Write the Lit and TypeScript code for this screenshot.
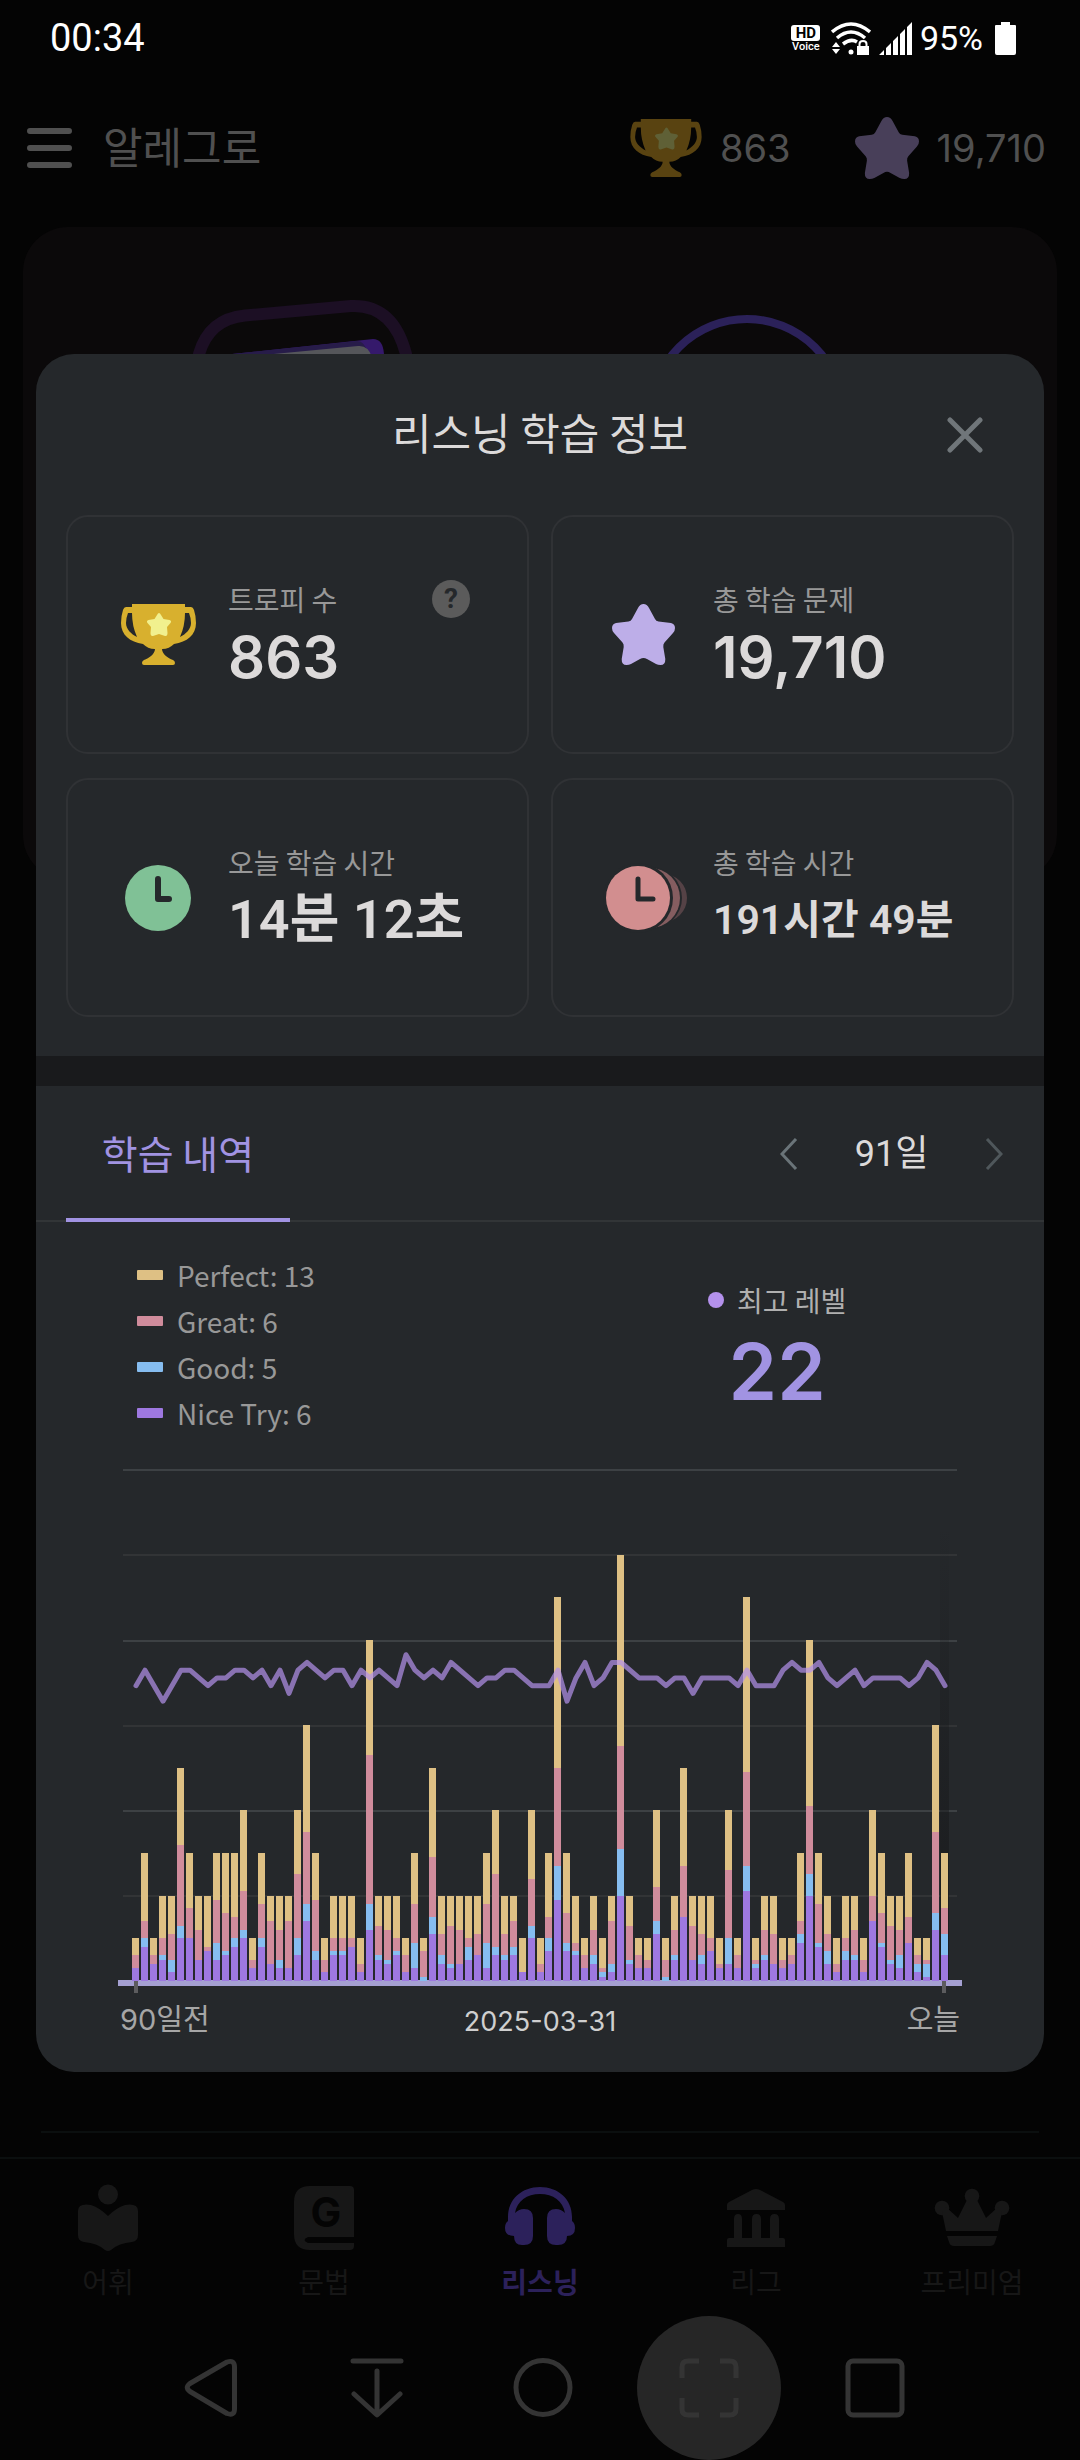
import { LitElement, html, svg, css, nothing } from "lit";
import { customElement } from "lit/decorators.js";

/* Cumulative answer counts per day: [nice try, good, great, perfect]. */
const DAYS: number[][] = [
  [3,3,6,10],[8,10,14,30],[4,4,6,10],[5,6,10,20],[2,5,11,20],[10,13,32,50],[10,10,17,30],[5,5,12,20],[7,7,8,20],[5,9,19,30],
  [6,7,16,30],[8,10,15,30],[10,12,21,40],[3,3,5,10],[8,10,18,30],[4,4,14,20],[3,5,12,20],[3,3,14,20],[6,10,25,40],[14,18,35,60],
  [5,7,19,30],[2,2,5,10],[6,7,10,20],[6,7,10,20],[8,8,10,20],[2,2,4,10],[12,18,53,80],[5,6,13,20],[4,5,12,20],[6,7,10,20],
  [2,2,6,10],[3,9,18,30],[0,1,7,10],[11,15,29,50],[4,6,11,20],[3,4,13,20],[4,4,12,20],[5,8,10,20],[6,6,11,20],[3,9,18,30],
  [6,8,25,40],[5,6,11,20],[6,8,14,20],[2,2,2,10],[10,13,24,40],[2,2,4,10],[7,10,15,30],[19,27,50,90],[7,9,16,30],[6,7,9,20],
  [3,3,6,10],[4,6,12,20],[1,2,3,10],[2,4,14,20],[20,31,55,100],[4,5,13,20],[3,3,6,10],[3,3,5,10],[11,14,22,40],[0,1,5,10],
  [5,6,12,20],[15,15,27,50],[5,5,13,20],[4,6,11,20],[7,7,10,20],[3,3,4,10],[4,10,26,40],[3,3,6,10],[21,27,49,90],[3,4,5,10],
  [5,6,12,20],[4,4,11,20],[3,3,5,10],[4,4,6,10],[9,11,14,30],[20,25,41,80],[8,9,18,30],[4,7,11,20],[2,2,4,10],[5,7,10,20],
  [5,6,12,20],[2,2,5,10],[14,14,20,40],[8,9,16,30],[4,5,13,20],[3,6,12,20],[9,9,15,30],[2,4,6,10],[1,4,5,10],[12,16,35,60],
  [6,11,17,30],
];

/* Level reached on each of the same days. */
const LEVELS: number[] = [
  22,24,22,20,22,24,24,23,22,23, 23,24,24,23,24,22,24,21,24,25, 24,23,24,24,22,24,23,24,23,22,
  26,24,23,24,23,25,24,23,22,23, 23,24,24,23,22,22,22,24,20,23, 25,22,23,25,25,24,23,23,23,22,
  23,23,21,23,23,23,23,22,24,22, 22,22,24,25,24,24,25,23,22,23, 24,22,23,23,23,23,22,23,25,24,
  22,
];

const LEGEND = [
  { name: "Perfect", value: 13, tone: "perfect" },
  { name: "Great", value: 6, tone: "great" },
  { name: "Good", value: 5, tone: "good" },
  { name: "Nice Try", value: 6, tone: "nice" },
];

const trophy = (cls: string) => svg`
  <svg class=${cls} viewBox="0 0 75 61" aria-hidden="true">
    <path class="cup" fill-rule="evenodd" d="M11 0H64V3H70Q72 3 73 6Q75 12 75 19C75 31 66 38 53 40C50 43 46 45 41 45C41 50 47 54 52 56Q54 57 54 59Q54 61 52 61H23Q21 61 21 59Q21 57 23 56C28 54 34 50 34 45C29 45 25 43 22 40C9 38 0 31 0 19Q0 12 2 6Q3 3 5 3H11ZM11 9H7Q5 14 5 19C5 25 10 30 16 33Q11 22 11 9ZM64 9H68Q70 14 70 19C70 25 65 30 59 33Q64 22 64 9Z"/>
    <path class="cup-star" d="M38 9Q39 9 40 11L42.500 15L48.500 16Q51 17 49.500 19L46 23L46.500 29Q46.500 32.500 44 32L38 30L32 32Q29.500 32.500 29.500 29L30 23L26.500 19Q25 17 27.500 16L33.500 15L36 11Q37 9 38 9Z"/>
  </svg>`;

const star = (cls: string) => svg`
  <svg class=${cls} viewBox="0 0 63 61" aria-hidden="true">
    <path class="star-fill" d="M31.500 0Q35 0 37 4L43 15Q44 17 46.500 17.500L59 19Q63 20 63 24Q63 27 61 29L52.500 38.500Q51 40 51.300 43L53.300 55Q53.500 61 48.500 61Q46 61 44 60L35 55Q31.500 53 28 55L19 60Q17 61 14.500 61Q9.500 61 9.700 55L11.700 43Q12 40 10.500 38.500L2 29Q0 27 0 24Q0 20 4 19L16.500 17.500Q19 17 20 15L26 4Q28 0 31.500 0Z"/>
  </svg>`;

const clock = () => svg`
  <svg class="ico-clock" viewBox="0 0 66 66" aria-hidden="true">
    <circle class="green" cx="33" cy="33" r="33"/>
    <path class="hand thick" d="M33 14V34H44"/>
  </svg>`;

const clocks = () => svg`
  <svg class="ico-clocks" viewBox="0 0 76 66" aria-hidden="true">
    <circle class="pink3" cx="58" cy="33" r="24"/>
    <circle class="hole" cx="46" cy="33" r="31"/>
    <circle class="pink2" cx="45" cy="33" r="30"/>
    <circle class="hole" cx="33" cy="33" r="35"/>
    <circle class="pink1" cx="33" cy="33" r="32"/>
    <path class="hand" d="M33 14V34H48"/>
  </svg>`;

const TABS = [
  { label: "어휘", art: svg`<circle cx="38" cy="12.500" r="10"/><path d="M38 34Q30 26 21 23Q8 21 8 29V53Q8 59 14 60Q27 61 35 68Q38 70 41 68Q49 61 62 60Q68 59 68 53V29Q68 21 55 23Q46 26 38 34Z"/>` },
  { label: "문법", art: svg`<path d="M24 4H64Q68 4 68 8V55H22Q15 58 22 61H68V64Q68 68 64 68H24Q8 68 8 52V20Q8 4 24 4Z"/><text class="g" x="40" y="45" text-anchor="middle">G</text>` },
  { label: "리스닝", active: true, art: svg`<path fill-rule="evenodd" d="M6 39V35C6 17 20 5 38 5S70 17 70 35V39Q73 41 73 46Q73 54 65 54Q65 63 56 63H54Q45 63 45 54V36Q45 27 54 27Q59 27 63 31C61 19 51 12 38 12S15 19 13 31Q17 27 22 27Q31 27 31 36V54Q31 63 22 63H20Q12 63 12 54Q3 54 3 46Q3 41 6 39Z"/>` },
  { label: "리그", art: svg`<path d="M9 28V23Q9 21 11 20L34 8Q38 6 42 8L65 20Q67 21 67 23V28ZM9 65V58Q9 56 11 56H16V37Q16 32 20 32T24 37V56H34V37Q34 32 38.500 32T43 37V56H52V37Q52 32 56.500 32T61 37V56H65Q67 56 67 58V65Z"/>` },
  { label: "프리미엄", art: svg`<circle cx="38" cy="14" r="7.300"/><circle cx="8" cy="26" r="7.300"/><circle cx="68" cy="26" r="7.300"/><path d="M8 30L12 25L24 36L33 18H43L52 36L64 25L68 30L64 49H12ZM13 54H63L61 60Q60 64 56 64H20Q16 64 15 60Z"/>` },
];

const KEYS = [
  { label: "뒤로", art: svg`<path d="M46 4L9 25.500Q3.500 29.500 9 33.500L46 55.500Q53.500 58 53.500 51V9Q53.500 1.500 46 4Z"/>` },
  { label: "알림창 내리기", art: svg`<path d="M6 3H54M30 13V56M7 36L30 57L53 36"/>` },
  { label: "홈", art: svg`<circle cx="30" cy="29.500" r="27"/>` },
  { label: "화면 캡처", art: svg`<path class="butt" d="M3 20V9Q3 3 9 3H20M41 3H51Q57 3 57 9V20M57 40V51Q57 57 51 57H41M20 57H9Q3 57 3 51V40"/>`, lit: true },
  { label: "최근 앱", art: svg`<rect x="3" y="3" width="54" height="54" rx="5"/>` },
];

@customElement("study-chart")
class StudyChart extends LitElement {
  static styles = css`
    :host { display: block; }
    .plot { display: block; width: 100%; height: auto; }
    .grid { stroke: #323436; stroke-width: 2; }
    .grid.strong { stroke: #3d4144; }
    .perfect { fill: #dec084; }
    .great { fill: #d08c9c; }
    .good { fill: #86bdf0; }
    .nice { fill: #9e78e0; }
    .axis { fill: #a5a0d2; }
    .tick { fill: #5c5c5e; }
    .level { fill: none; stroke: #b491ec; stroke-opacity: 0.7; stroke-width: 5; stroke-linejoin: round; stroke-linecap: round; }
  `;

  private static readonly base = 516;
  private static readonly unit = 4.265;

  private barX(i: number) {
    return 14 + i * 9 - (i > 45 ? 1 : 0);
  }

  private bar(day: number[], i: number) {
    const tones = ["nice", "good", "great", "perfect"];
    let from = 0;
    return day.map((to, k) => {
      const bottom = Math.round(StudyChart.base - from * StudyChart.unit);
      const top = Math.round(StudyChart.base - to * StudyChart.unit);
      from = to;
      return top === bottom ? nothing
        : svg`<rect class=${tones[k]} x=${this.barX(i)} y=${top} width="7" height=${bottom - top}></rect>`;
    });
  }

  render() {
    const line = LEVELS
      .map((v, i) => `${this.barX(i) + 4},${(220.7 - (v - 22) * 7.75).toFixed(1)}`)
      .join(" ");
    const rows = [5, 90, 176, 261, 346, 431];
    return html`
      <svg class="plot" viewBox="0 0 844 535" role="img" aria-label="91일 학습 내역 그래프">
        <defs>
          <linearGradient id="shade" x1="0" y1="0" x2="0" y2="1">
            <stop offset="0" stop-color="#17181a" stop-opacity="0"></stop>
            <stop offset="1" stop-color="#17181a" stop-opacity="0.8"></stop>
          </linearGradient>
        </defs>
        ${rows.map((y, i) => svg`<line class=${i === 1 || i === 3 || i === 5 ? "grid" : "grid strong"} x1="5" x2="839" y1=${y} y2=${y}></line>`)}
        <rect x="822" y="60" width="9" height="456" fill="url(#shade)"></rect>
        <rect class="axis" x="0" y="515" width="844" height="6"></rect>
        ${DAYS.map((d, i) => this.bar(d, i))}
        <rect class="tick" x="16" y="516" width="4" height="12"></rect>
        <rect class="tick" x="824" y="516" width="4" height="12"></rect>
        <polyline class="level" points=${line}></polyline>
      </svg>`;
  }
}

@customElement("app-root")
class AppRoot extends LitElement {
  static styles = css`
    :host {
      display: block;
      color: #dcdada;
      font-family: "Noto Sans CJK KR", sans-serif;
      --panel: #25282b;
      --muted: #a0a0a0;
      --violet: #a193e2;
    }
    * { box-sizing: border-box; }
    button { margin: 0; padding: 0; border: 0; background: none; color: inherit; font: inherit; }
    a { color: inherit; text-decoration: none; }
    h1, h2, p, dl, dd, dt, ul { margin: 0; padding: 0; font-weight: 400; }
    ul { list-style: none; }
    svg { display: block; flex: none; }

    .screen { position: relative; display: flex; flex-direction: column; min-height: 100vh; background: #040404; }

    /* status bar */
    .status { display: flex; align-items: center; justify-content: space-between; height: 76px; padding: 0 64px 0 50px; color: #fff; font-family: Roboto, sans-serif; }
    .time { font-size: 38px; }
    .signals { display: flex; align-items: center; gap: 8px; font-size: 34px; }
    .volte { display: flex; flex-direction: column; align-items: center; width: 30px; margin-right: 2px; font-size: 11px; line-height: 11px; font-weight: 500; }
    .hd { width: 29px; border-radius: 3px; background: #fff; color: #000; font-size: 15px; line-height: 16px; font-weight: 700; text-align: center; }
    .wifi { width: 40px; height: 33px; }
    .bars { width: 33px; height: 33px; }
    .battery { width: 21px; height: 33px; margin-left: 4px; }

    /* app header behind the dialog */
    .appbar { display: flex; align-items: center; height: 143px; margin-bottom: 8px; padding: 0 34px 0 27px; color: #505050; }
    .menu { width: 45px; height: 42px; margin-right: 31px; }
    .menu svg { width: 45px; height: 42px; }
    .brand { flex: 1; padding-bottom: 6px; font-size: 43px; line-height: 60px; }
    .score { display: flex; align-items: center; gap: 18px; margin-left: 64px; font-family: Inter, sans-serif; font-size: 38px; font-weight: 400; }
    .score .t { width: 72px; height: 58px; }
    .score .s { width: 64px; height: 62px; }
    .score .cup { fill: #594311; }
    .score .cup-star { fill: #5f6036; }
    .score .star-fill { fill: #483f59; }

    .main { display: flex; flex: 1; flex-direction: column; justify-content: space-between; }
    .hero { margin: 0 23px; border-radius: 45px; background: #0b090a; }
    .hero svg { width: 100%; height: auto; }
    .rule { margin: 0 41px 24px; border-top: 2px solid #0b0f0f; }

    .tabbar { display: grid; grid-template-columns: repeat(5, 1fr); border-top: 2px solid #0b0f0f; color: #171717; }
    .tab { display: flex; flex-direction: column; align-items: center; gap: 9px; padding: 23px 0 15px; font-size: 28px; line-height: 40px; }
    .tab svg { width: 76px; height: 70px; fill: currentColor; }
    .tab .g { fill: #040404; font: 700 41px Inter, sans-serif; }
    .tab.on { color: #2c215b; font-weight: 700; }

    .keys { display: flex; justify-content: space-between; padding: 0 133px 0 139px; }
    .key { display: grid; place-items: center; width: 144px; height: 144px; border-radius: 50%; }
    .key svg { width: 60px; height: 60px; fill: none; stroke: #343434; stroke-width: 5; stroke-linecap: round; stroke-linejoin: round; }
    .key .butt { stroke-linecap: butt; }
    .key.lit { background: #262626; }

    /* dialog */
    .dialog { position: absolute; top: 354px; right: 36px; left: 36px; overflow: hidden; border-radius: 38px; background: var(--panel); }
    .head { display: grid; grid-template-columns: 1fr auto 1fr; align-items: center; height: 161px; padding: 0 49px; }
    .head h1 { grid-column: 2; padding-bottom: 8px; font-size: 43px; line-height: 60px; }
    .close { justify-self: end; display: grid; place-items: center; width: 60px; height: 60px; }
    .close svg { width: 36px; height: 36px; stroke: #70767a; stroke-width: 5; stroke-linecap: round; }

    .stats { display: grid; grid-template-columns: 1fr 1fr; gap: 24px 22px; padding: 0 30px 39px; }
    .stat { display: flex; align-items: center; gap: 32px; height: 239px; padding: 0 57px 0 52px; border: 2px solid #303235; border-radius: 22px; }
    .slot { display: grid; place-items: center; flex: none; width: 76px; }
    .slot .t { width: 75px; height: 61px; }
    .slot .s { width: 63px; height: 61px; }
    .cup { fill: #d8b02e; }
    .cup-star { fill: #f1f08e; }
    .star-fill { fill: #bdaee8; }
    .ico-clock { width: 66px; height: 66px; }
    .ico-clocks { width: 76px; height: 66px; overflow: visible; }
    .green { fill: #80c196; }
    .pink1 { fill: #d28e8f; }
    .pink2 { fill: #855d60; }
    .pink3 { fill: #554246; }
    .hole { fill: var(--panel); }
    .hand { fill: none; stroke: var(--panel); stroke-width: 5; stroke-linecap: round; stroke-linejoin: round; }
    .hand.thick { stroke-width: 6; }
    .facts { flex: 1; min-width: 0; padding-top: 4px; white-space: nowrap; }
    .facts dt { display: flex; align-items: center; justify-content: space-between; color: #989898; font-size: 28px; line-height: 40px; }
    .facts dd { font-size: 54px; line-height: 76px; font-family: Inter, "Noto Sans CJK KR", sans-serif; font-weight: 600; }
    .facts dd.num { font-size: 58px; }
    .facts dd.mixed { font-family: Roboto, "Noto Sans CJK KR", sans-serif; }
    .facts dd.small { font-size: 41px; }
    .help { width: 38px; height: 38px; border-radius: 50%; background: #5b5b5b; color: var(--panel); font: 700 28px/38px Roboto, sans-serif; text-align: center; }

    .band { height: 30px; background: #191a1c; }
    .bar { display: flex; justify-content: space-between; height: 136px; padding: 0 28px 0 30px; border-bottom: 2px solid #323537; }
    .section { width: 224px; height: 136px; border-bottom: 4px solid var(--violet); color: var(--violet); font-size: 39px; line-height: 132px; }
    .range { display: flex; align-items: center; padding-top: 2px; }
    .range button { display: grid; place-items: center; width: 44px; height: 60px; }
    .range svg { width: 18px; height: 32px; fill: none; stroke: #6a7479; stroke-width: 3; }
    .range .next svg { stroke: #4f575b; }
    .range output { width: 161px; font: 400 36px/60px Roboto, "Noto Sans CJK KR", sans-serif; text-align: center; }

    .summary { display: grid; grid-template-columns: 8fr 9fr; padding: 30px 0 29px; }
    .legend { padding-left: 101px; color: #989898; font-size: 28px; }
    .legend li { display: flex; align-items: center; gap: 14px; height: 46px; }
    .chip { width: 26px; height: 10px; border-radius: 1px; }
    .chip.perfect { background: #dec084; }
    .chip.great { background: #d08c9c; }
    .chip.good { background: #86bdf0; }
    .chip.nice { background: #9e78e0; }
    .best { display: flex; flex-direction: column; align-items: center; gap: 12px; padding-top: 28px; }
    .best p { display: flex; align-items: center; gap: 13px; color: #b0b0b0; font-size: 28px; line-height: 40px; }
    .dot { width: 16px; height: 16px; border-radius: 50%; background: #b491ec; }
    .best strong { color: var(--violet); font: 600 78px/80px Inter, sans-serif; }

    .chart { padding: 0 82px; }
    .span { display: grid; grid-template-columns: 1fr auto 1fr; padding: 0 84px 30px; color: #a6a6a6; font: 400 29px/40px Inter, "Noto Sans CJK KR", sans-serif; }
    .span .date { padding-top: 2px; color: #cfcfcf; font-size: 27px; }
    .span .end { text-align: right; }
  `;

  render() {
    return html`
      <div class="screen">
        <div class="status">
          <span class="time">00:34</span>
          <span class="signals">
            <span class="volte"><span class="hd">HD</span>Voice</span>
            <svg class="wifi" viewBox="0 0 40 33" fill="none" stroke="#fff" stroke-width="3.500" aria-hidden="true">
              <path d="M1 10Q20 -6 39 10M6 16Q20 4 34 16M12 22Q20 16 26 20"/>
              <circle cx="20" cy="30" r="2.500" fill="#fff" stroke="none"/>
              <path d="M1 25L5 20L9 25ZM1 27L5 32L9 27Z" fill="#fff" stroke="none"/>
              <rect x="26" y="24" width="12" height="9" fill="#fff" stroke="none"/>
              <path d="M28.500 25V22Q28.500 19 32 19T35.500 22V25" stroke-width="2"/>
            </svg>
            <svg class="bars" viewBox="0 0 33 33" fill="#fff" aria-hidden="true">
              <path d="M0 33L5 28V33ZM7 33V26L12 21V33ZM14 33V19L19 14V33ZM21 33V12L26 7V33ZM28 33V5L33 0V33Z"/>
            </svg>
            <span>95%</span>
            <svg class="battery" viewBox="0 0 21 33" fill="#fff" aria-hidden="true">
              <path d="M6 0H15V3H20Q21 3 21 4V31Q21 33 19 33H2Q0 33 0 31V4Q0 3 1 3H6Z"/>
            </svg>
          </span>
        </div>

        <header class="appbar">
          <button class="menu" aria-label="메뉴">
            <svg viewBox="0 0 45 42" stroke="#505050" stroke-width="6" stroke-linecap="round" aria-hidden="true"><path d="M3 4H42M3 21H42M3 38H42"/></svg>
          </button>
          <span class="brand">알레그로</span>
          <span class="score">${trophy("t")}863</span>
          <span class="score">${star("s")}19,710</span>
        </header>

        <main class="main">
          <div class="hero">
            <svg viewBox="0 0 1034 653" aria-hidden="true">
              <path d="M170 150L176 127Q186 92 222 88.500L328 79Q370 77 383 127L387 150" fill="none" stroke="#1c0f24" stroke-width="12"/>
              <path d="M190 129L350 112Q360 112 361 127V142H190Z" fill="#35196b"/>
              <path d="M190 129L334 114Q342 114 345 127V142H190Z" fill="#271c49"/>
              <path d="M240 128L335 119Q345 118 349 130V142H240Z" fill="#55565a"/>
              <circle cx="724" cy="188" r="96" fill="none" stroke="#2b2159" stroke-width="8"/>
            </svg>
          </div>
          <div class="rule"></div>
        </main>

        <nav class="tabbar" aria-label="주 메뉴">
          ${TABS.map((t) => html`
            <a class=${t.active ? "tab on" : "tab"} href="#">
              <svg viewBox="0 0 76 70" aria-hidden="true">${t.art}</svg>${t.label}
            </a>`)}
        </nav>

        <div class="keys">
          ${KEYS.map((k) => html`
            <button class=${k.lit ? "key lit" : "key"} aria-label=${k.label}>
              <svg viewBox="0 0 60 60" aria-hidden="true">${k.art}</svg>
            </button>`)}
        </div>

        <section class="dialog" role="dialog" aria-labelledby="title">
          <div class="head">
            <h1 id="title">리스닝 학습 정보</h1>
            <button class="close" aria-label="닫기">
              <svg viewBox="0 0 36 36" aria-hidden="true"><path d="M3 3L33 33M33 3L3 33"/></svg>
            </button>
          </div>

          <div class="stats">
            <div class="stat">
              <span class="slot">${trophy("t")}</span>
              <dl class="facts">
                <dt>트로피 수<button class="help" aria-label="도움말">?</button></dt>
                <dd class="num">863</dd>
              </dl>
            </div>
            <div class="stat">
              <span class="slot">${star("s")}</span>
              <dl class="facts"><dt>총 학습 문제</dt><dd class="num">19,710</dd></dl>
            </div>
            <div class="stat">
              <span class="slot">${clock()}</span>
              <dl class="facts"><dt>오늘 학습 시간</dt><dd class="mixed">14분 12초</dd></dl>
            </div>
            <div class="stat">
              <span class="slot">${clocks()}</span>
              <dl class="facts"><dt>총 학습 시간</dt><dd class="mixed small">191시간 49분</dd></dl>
            </div>
          </div>

          <div class="band"></div>

          <div class="bar">
            <button class="section">학습 내역</button>
            <div class="range">
              <button aria-label="이전 기간"><svg viewBox="0 0 18 32" aria-hidden="true"><path d="M16 1L2 16L16 31"/></svg></button>
              <output>91일</output>
              <button class="next" aria-label="다음 기간"><svg viewBox="0 0 18 32" aria-hidden="true"><path d="M2 1L16 16L2 31"/></svg></button>
            </div>
          </div>

          <div class="summary">
            <ul class="legend">
              ${LEGEND.map((l) => html`<li><span class="chip ${l.tone}"></span>${l.name}: ${l.value}</li>`)}
            </ul>
            <div class="best">
              <p><span class="dot"></span>최고 레벨</p>
              <strong>22</strong>
            </div>
          </div>

          <div class="chart"><study-chart></study-chart></div>
          <div class="span">
            <span>90일전</span><span class="date">2025-03-31</span><span class="end">오늘</span>
          </div>
        </section>
      </div>`;
  }
}
